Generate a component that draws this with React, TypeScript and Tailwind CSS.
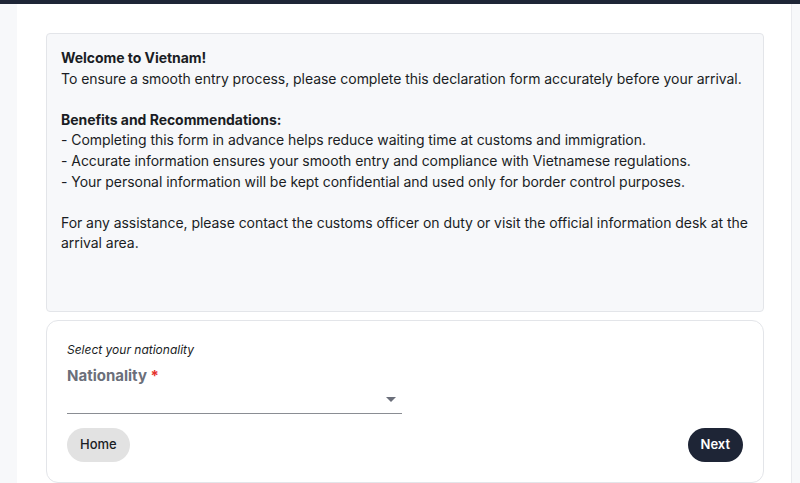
import React from "react";

export default function App() {
  return (
    <div
      className="min-h-[483px] bg-[#f7f8fa] text-[#1a1d24]"
      style={{ fontFamily: "Inter, 'Noto Sans', sans-serif" }}
    >
      <div className="h-[4px] bg-[#1e2536]" />
      <div className="ml-[17px] mr-[8px] bg-white border-r border-[#e9eaee] pt-[29px] px-[29px] pb-4 min-h-[479px]">
        <div className="w-[718px] h-[279px] bg-[#f7f8fa] border border-[#e3e5e9] rounded-[4px] pl-[14px] pr-[10px] pt-[14px] text-[14px] leading-[20.6px] tracking-[-0.05px]">
          <p className="font-bold">Welcome to Vietnam!</p>
          <p>To ensure a smooth entry process, please complete this declaration form accurately before your arrival.</p>
          <p>&nbsp;</p>
          <p className="font-bold">Benefits and Recommendations:</p>
          <p>- Completing this form in advance helps reduce waiting time at customs and immigration.</p>
          <p>- Accurate information ensures your smooth entry and compliance with Vietnamese regulations.</p>
          <p>- Your personal information will be kept confidential and used only for border control purposes.</p>
          <p>&nbsp;</p>
          <p>For any assistance, please contact the customs officer on duty or visit the official information desk at the arrival area.</p>
        </div>
        <div className="mt-[8px] w-[718px] border border-[#e3e5e9] rounded-[12px] bg-white px-[20px] pt-[21px] pb-[20px]">
          <p className="italic text-[12px] leading-[16px] text-[#1a1d24]">Select your nationality</p>
          <div className="mt-[9px] text-[15px] font-bold text-[#6b6f7a] leading-[18px]">
            Nationality <span className="text-[#e5322d]">*</span>
          </div>
          <div className="w-[335px] h-[29px] border-b border-[#8a8d93] flex items-center justify-end pr-[6px]">
            <svg width="10" height="5" viewBox="0 0 10 5">
              <path d="M0 0 L10 0 L5 5 Z" fill="#6b6f7a" />
            </svg>
          </div>
          <div className="mt-[14px] flex justify-between items-center">
            <button className="h-[34px] px-[13px] rounded-full bg-[#e2e2e2] text-[13px] font-medium text-[#1a1d24]">
              Home
            </button>
            <button className="h-[34px] px-[13px] rounded-full bg-[#1e2536] text-[13px] font-semibold text-white">
              Next
            </button>
          </div>
        </div>
      </div>
    </div>
  );
}
